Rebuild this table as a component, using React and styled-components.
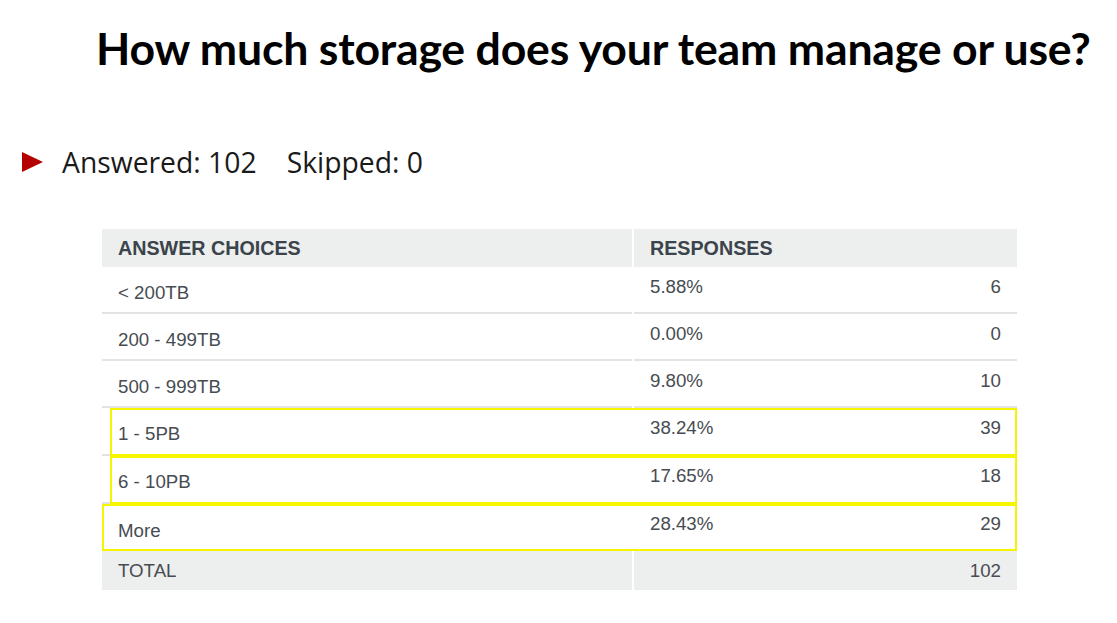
import React from "react";
import styled, { createGlobalStyle } from "styled-components";

const Global = createGlobalStyle`
  html, body { margin: 0; padding: 0; background: #ffffff; }
  body { width: 1117px; height: 623px; overflow: hidden; }
`;

const Page = styled.div`
  display: flex;
  flex-direction: column;
  padding-top: 22px;
`;

const Title = styled.h1`
  margin: 0 0 0 96px;
  font-family: Lato, "Open Sans", sans-serif;
  font-weight: 700;
  font-size: 44.6px;
  line-height: 52px;
  color: #000;
  letter-spacing: -0.2px;
  white-space: nowrap;
`;

const Summary = styled.div`
  display: flex;
  align-items: center;
  margin: 70px 0 0 22px;
  font-family: "Open Sans", "Noto Sans", sans-serif;
  font-size: 28.3px;
  line-height: 36px;
  color: #1a1a1a;
`;

const Arrow = styled.span`
  width: 0;
  height: 0;
  border-top: 10px solid transparent;
  border-bottom: 10px solid transparent;
  border-left: 21px solid #b50000;
  margin-right: 19px;
`;

const Stat = styled.span`
  margin-right: ${(p) => p.$gap || 0}px;
`;

const Table = styled.div`
  margin: 49px 0 0 102px;
  width: 915px;
  display: flex;
  flex-direction: column;
  font-family: "Liberation Sans", Arial, sans-serif;
`;

const Row = styled.div`
  position: relative;
  display: grid;
  grid-template-columns: 530px 383px;
  column-gap: 2px;
  height: ${(p) => p.$h}px;

  ${(p) =>
    p.$mark &&
    `
    &::after {
      content: "";
      position: absolute;
      left: ${p.$mark.left}px;
      right: 0;
      top: ${p.$mark.top}px;
      bottom: ${p.$mark.bottom}px;
      border: 2px solid #f7f400;
      pointer-events: none;
    }
  `}
`;

const HeadCell = styled.div`
  background: #edeeee;
  display: flex;
  align-items: center;
  padding: 0 16px;
  font-weight: 700;
  font-size: 19.7px;
  color: #3b434b;
  text-transform: uppercase;
`;

const ChoiceCell = styled.div`
  display: flex;
  align-items: center;
  padding: 6px 16px 0;
  font-size: 18.7px;
  color: #474c52;
  border-bottom: ${(p) => (p.$last ? "none" : "2px solid #e2e3e4")};
  box-sizing: border-box;
`;

const ResponseCell = styled.div`
  display: flex;
  justify-content: space-between;
  align-items: flex-start;
  padding: 9px 16px 0;
  font-size: 18.7px;
  color: #474c52;
  border-bottom: ${(p) => (p.$last ? "none" : "2px solid #e2e3e4")};
  box-sizing: border-box;
`;

const TotalCell = styled.div`
  background: #edeeee;
  display: flex;
  align-items: center;
  justify-content: ${(p) => (p.$right ? "flex-end" : "flex-start")};
  padding: 0 16px;
  font-size: 18.7px;
  color: #474c52;
`;

const rows = [
  { choice: "< 200TB", pct: "5.88%", n: 6, h: 47 },
  { choice: "200 - 499TB", pct: "0.00%", n: 0, h: 47 },
  { choice: "500 - 999TB", pct: "9.80%", n: 10, h: 47 },
  { choice: "1 - 5PB", pct: "38.24%", n: 39, h: 48, mark: { left: 8, top: 0, bottom: 0 } },
  { choice: "6 - 10PB", pct: "17.65%", n: 18, h: 48, mark: { left: 8, top: 0, bottom: 0 } },
  { choice: "More", pct: "28.43%", n: 29, h: 47, mark: { left: 0, top: 0, bottom: 0 } },
];

export default function App() {
  return (
    <>
      <Global />
      <Page>
        <Title>How much storage does your team manage or use?</Title>
        <Summary>
          <Arrow />
          <Stat $gap={30}>Answered: 102</Stat>
          <Stat>Skipped: 0</Stat>
        </Summary>
        <Table>
          <Row $h={38}>
            <HeadCell>Answer Choices</HeadCell>
            <HeadCell>Responses</HeadCell>
          </Row>
          {rows.map((r, i) => (
            <Row key={r.choice} $h={r.h} $mark={r.mark}>
              <ChoiceCell $last={i === rows.length - 1}>{r.choice}</ChoiceCell>
              <ResponseCell $last={i === rows.length - 1}>
                <span>{r.pct}</span>
                <span>{r.n}</span>
              </ResponseCell>
            </Row>
          ))}
          <Row $h={39}>
            <TotalCell>TOTAL</TotalCell>
            <TotalCell $right>102</TotalCell>
          </Row>
        </Table>
      </Page>
    </>
  );
}
